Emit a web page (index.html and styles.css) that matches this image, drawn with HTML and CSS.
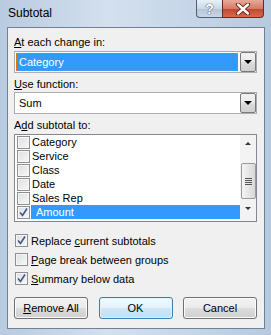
FILE: index.html
```html
<!DOCTYPE html>
<html lang="en">

<head>
  <meta charset="UTF-8" />
  <title>Subtotal</title>
  <link rel="stylesheet" href="styles.css">
</head>

<body>
  <div class="window">
    <!-- Title bar -->
    <div class="titlebar">
      <span class="title">Subtotal</span>
      <div class="caption">
        <span class="capBtn help">?</span>
        <span class="capBtn close">
          <svg width="16" height="12" viewBox="0 0 16 12">
            <path d="M3 1.5 L13 10.5 M13 1.5 L3 10.5" stroke="#5a1c12" stroke-width="4.2" stroke-linecap="round"/>
            <path d="M3 1.5 L13 10.5 M13 1.5 L3 10.5" stroke="#fff" stroke-width="2.4" stroke-linecap="round"/>
          </svg>
        </span>
      </div>
    </div>

    <!-- Client area -->
    <div class="client">
      <div class="label"><u>A</u>t each change in:</div>
      <div class="combo">
        <span class="comboText focused">Category</span>
        <span class="dropBtn"><span class="arrowDown"></span></span>
      </div>

      <div class="label gapTop"><u>U</u>se function:</div>
      <div class="combo">
        <span class="comboText">Sum</span>
        <span class="dropBtn"><span class="arrowDown"></span></span>
      </div>

      <div class="label gapTop">A<u>d</u>d subtotal to:</div>
      <div class="listBox">
        <div class="items">
          <div class="item"><span class="chk"></span><span class="itemText">Category</span></div>
          <div class="item"><span class="chk"></span><span class="itemText">Service</span></div>
          <div class="item"><span class="chk"></span><span class="itemText">Class</span></div>
          <div class="item"><span class="chk"></span><span class="itemText">Date</span></div>
          <div class="item"><span class="chk"></span><span class="itemText">Sales Rep</span></div>
          <div class="item">
            <span class="chk checked">
              <svg width="11" height="11" viewBox="0 0 11 11"><path d="M2 5.5 L4.5 8.5 L9 1.5" fill="none" stroke="#3f5789" stroke-width="1.6"/></svg>
            </span>
            <span class="itemText selected">Amount</span>
          </div>
        </div>
        <div class="scrollbar">
          <span class="sbArrow up"></span>
          <span class="thumb">
            <span class="grip"></span>
          </span>
          <span class="sbArrow down"></span>
        </div>
      </div>

      <div class="options">
        <div class="option">
          <span class="chk checked">
            <svg width="11" height="11" viewBox="0 0 11 11"><path d="M2 5.5 L4.5 8.5 L9 1.5" fill="none" stroke="#3f5789" stroke-width="1.6"/></svg>
          </span>
          <span>Replace <u>c</u>urrent subtotals</span>
        </div>
        <div class="option">
          <span class="chk"></span>
          <span><u>P</u>age break between groups</span>
        </div>
        <div class="option">
          <span class="chk checked">
            <svg width="11" height="11" viewBox="0 0 11 11"><path d="M2 5.5 L4.5 8.5 L9 1.5" fill="none" stroke="#3f5789" stroke-width="1.6"/></svg>
          </span>
          <span><u>S</u>ummary below data</span>
        </div>
      </div>

      <div class="buttons">
        <button class="btn"><u>R</u>emove All</button>
        <button class="btn btnDefault">OK</button>
        <button class="btn">Cancel</button>
      </div>
    </div>
  </div>
</body>

</html>
```

FILE: styles.css
```css
body {
  margin: 0;
  font-family: "Liberation Sans", Arial, sans-serif;
  font-size: 11px;
  color: #000;
}

.window {
  width: 271px;
  height: 335px;
  background: linear-gradient(90deg, #b9cbe0, #d3e0ee 40%, #c6d6e8 70%, #b7c9de);
  display: flex;
  flex-direction: column;
  overflow: hidden;
}

/* ---------- title bar ---------- */
.titlebar {
  height: 27px;
  display: flex;
  align-items: flex-start;
}

.title {
  padding: 6px 0 0 8px;
  font-size: 12px;
  line-height: 15px;
}

.caption {
  margin-left: auto;
  margin-right: 7px;
  display: flex;
  height: 18px;
}

.capBtn {
  display: flex;
  align-items: center;
  justify-content: center;
  height: 18px;
  box-sizing: border-box;
  border: 1px solid #4d5f78;
  border-top: none;
  color: #fff;
  font-weight: bold;
}

.help {
  width: 26px;
  border-radius: 0 0 0 4px;
  border-right: none;
  background: linear-gradient(#e9f0f7, #cbd8e6 50%, #b3c4d8 51%, #c9d7e6);
  font-size: 14px;
  text-shadow: 0 0 1px #27364d, 0 0 1px #27364d;
}

.close {
  width: 42px;
  border-radius: 0 0 4px 0;
  border-color: #6b2a20;
  background: linear-gradient(#e8a999, #d47b66 50%, #c2452d 51%, #d76a4c);
}

/* ---------- client area ---------- */
.client {
  margin: 0 6px 0 7px;
  height: 302px;
  box-sizing: border-box;
  border: 1px solid #6f8197;
  background: #f0f0f0;
  padding: 7px 7px 0 6px;
  display: flex;
  flex-direction: column;
}

.label {
  line-height: 15px;
  height: 15px;
  margin-bottom: 1px;
}

.gapTop {
  margin-top: 4px;
  margin-bottom: 0;
}

.combo {
  height: 22px;
  box-sizing: border-box;
  border: 1px solid #abadb3;
  background: #fff;
  display: flex;
  padding: 1px;
}

.comboText {
  flex: 1;
  display: flex;
  align-items: center;
  padding-left: 2px;
  margin-right: 2px;
  border: 1px solid transparent;
}

.comboText.focused {
  background: #3399ff;
  color: #fff;
  border: 1px dotted #e07b1d;
}

.dropBtn {
  width: 16px;
  margin: -1px -1px -1px 0;
  box-sizing: border-box;
  border: 1px solid #7a7a7a;
  border-radius: 2px;
  background: linear-gradient(#f2f2f2, #ebebeb 50%, #dddddd 51%, #cfcfcf);
  display: flex;
  align-items: center;
  justify-content: center;
}

.arrowDown {
  width: 0;
  height: 0;
  border-left: 4px solid transparent;
  border-right: 4px solid transparent;
  border-top: 4px solid #000;
}

/* ---------- list box ---------- */
.listBox {
  height: 88px;
  box-sizing: border-box;
  border: 1px solid #828790;
  background: #fff;
  display: flex;
  margin-top: 1px;
}

.items {
  flex: 1;
}

.item {
  height: 14px;
  display: flex;
  align-items: center;
  padding-left: 2px;
}

.itemText {
  margin-left: 1px;
  padding-left: 1px;
  height: 14px;
  line-height: 14px;
  flex: 1;
}

.itemText.selected {
  background: #3399ff;
  color: #fff;
  padding-left: 5px;
}

.chk {
  width: 13px;
  height: 13px;
  box-sizing: border-box;
  border: 1px solid #8f8f8f;
  background: linear-gradient(135deg, #dcdfe3, #f7f7f7);
  box-shadow: inset 0 0 0 1px #f6f6f6;
  display: flex;
  align-items: center;
  justify-content: center;
  flex-shrink: 0;
}

.scrollbar {
  width: 16px;
  background: #f3f3f3;
  display: flex;
  flex-direction: column;
  align-items: center;
}

.sbArrow {
  width: 0;
  height: 0;
  border-left: 3px solid transparent;
  border-right: 3px solid transparent;
}

.sbArrow.up {
  margin-top: 7px;
  border-bottom: 3px solid #333;
}

.sbArrow.down {
  margin-top: 8px;
  border-top: 3px solid #333;
}

.thumb {
  margin-top: 18px;
  width: 15px;
  height: 36px;
  box-sizing: border-box;
  border: 1px solid #9a9a9a;
  border-radius: 2px;
  background: linear-gradient(90deg, #f4f4f4, #e6e6e6 50%, #d8d8d8);
  display: flex;
  align-items: center;
  justify-content: center;
}

.grip {
  width: 7px;
  height: 7px;
  background: repeating-linear-gradient(#555 0 1px, transparent 1px 2px);
}

/* ---------- options ---------- */
.options {
  margin-top: 9px;
  display: flex;
  flex-direction: column;
}

.option {
  height: 19px;
  display: flex;
  align-items: center;
  gap: 3px;
  padding-left: 1px;
}

/* ---------- buttons ---------- */
.buttons {
  margin-top: 9px;
  display: flex;
  justify-content: space-between;
}

.btn {
  width: 74px;
  height: 22px;
  font-family: inherit;
  font-size: 11px;
  color: #000;
  border: 1px solid #707070;
  border-radius: 3px;
  background: linear-gradient(#f2f2f2, #ebebeb 50%, #dddddd 51%, #cfcfcf);
  box-shadow: inset 0 0 0 1px #fbfbfb;
  padding: 0;
}

.btnDefault {
  border-color: #3c7fb1;
  background: linear-gradient(#f5fbfe, #e3f1fb 50%, #cfe7f7 51%, #c0dff4);
  box-shadow: inset 0 0 0 1px #e0f1fd;
}
```
